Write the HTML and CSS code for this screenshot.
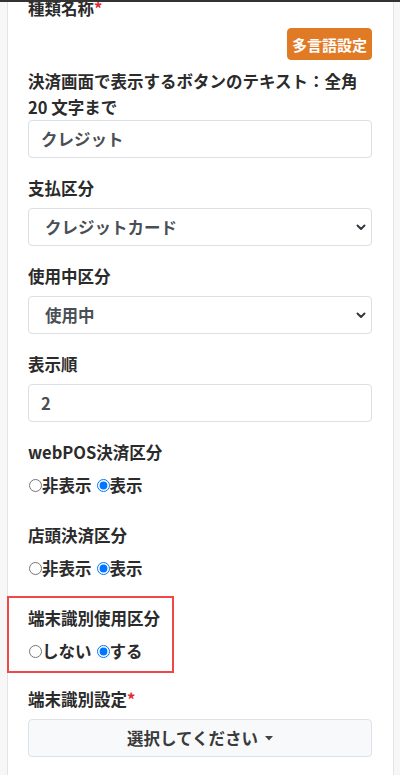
FILE: index.html
```html
<!DOCTYPE html>
<html lang="ja">
<head>
<meta charset="utf-8">
<title>種類設定</title>
<link rel="stylesheet" href="styles.css">
</head>
<body>
<div class="topbar"></div>
<main class="card">
  <div class="group">
    <label class="lbl req">種類名称</label>
    <div class="btn-row"><button class="btn-orange" type="button">多言語設定</button></div>
    <label class="lbl lbl-tight">決済画面で表示するボタンのテキスト：全角<br>20 文字まで</label>
    <input class="ctl" type="text" value="クレジット">
  </div>

  <div class="group">
    <label class="lbl">支払区分</label>
    <div class="select-wrap">
      <select class="ctl sel"><option>クレジットカード</option></select>
      <svg class="chev" width="10" height="7" viewBox="0 0 10 7"><path d="M1.5 1.5 L5 5 L8.5 1.5" fill="none" stroke="#343a40" stroke-width="2" stroke-linecap="round" stroke-linejoin="round"/></svg>
    </div>
  </div>

  <div class="group">
    <label class="lbl">使用中区分</label>
    <div class="select-wrap">
      <select class="ctl sel"><option>使用中</option></select>
      <svg class="chev" width="10" height="7" viewBox="0 0 10 7"><path d="M1.5 1.5 L5 5 L8.5 1.5" fill="none" stroke="#343a40" stroke-width="2" stroke-linecap="round" stroke-linejoin="round"/></svg>
    </div>
  </div>

  <div class="group">
    <label class="lbl">表示順</label>
    <input class="ctl" type="text" value="2">
  </div>

  <div class="group radio-group">
    <div class="lbl">webPOS決済区分</div>
    <div class="radios">
      <label class="opt"><input type="radio" name="webpos">非表示</label>
      <label class="opt"><input type="radio" name="webpos" checked>表示</label>
    </div>
  </div>

  <div class="group radio-group">
    <div class="lbl">店頭決済区分</div>
    <div class="radios">
      <label class="opt"><input type="radio" name="store">非表示</label>
      <label class="opt"><input type="radio" name="store" checked>表示</label>
    </div>
  </div>

  <div class="group highlight">
    <div class="lbl">端末識別使用区分</div>
    <div class="radios">
      <label class="opt"><input type="radio" name="term">しない</label>
      <label class="opt"><input type="radio" name="term" checked>する</label>
    </div>
  </div>

  <div class="group">
    <div class="lbl req">端末識別設定</div>
    <button class="dd" type="button">選択してください<svg class="caret" width="8" height="5" viewBox="0 0 8 5"><path d="M0 0 H8 L4 4.5 Z" fill="#444"/></svg></button>
  </div>
</main>
</body>
</html>
```

FILE: styles.css
```css
html, body {
  margin: 0;
  padding: 0;
  background: #f7f7f7;
}

body {
  font-family: "Noto Sans CJK JP", "Noto Sans", sans-serif;
  font-size: 16.5px;
  color: #2b2b2b;
}

.topbar {
  position: fixed;
  top: 0;
  left: 0;
  right: 0;
  height: 2px;
  background: #333;
  z-index: 10;
}

.card {
  margin: -5px 6px 0 7px;
  background: #fff;
  border: 1px solid #e4e4e4;
  border-top: none;
  padding: 0 21px 0 20px;
  min-height: 820px;
}

.group {
  margin-bottom: 17px;
}

.radio-group {
  margin-bottom: 24px;
}

.lbl {
  display: block;
  font-weight: 700;
  line-height: 26px;
  margin-bottom: 7px;
}

.lbl-tight {
  margin-bottom: 0;
}

.req::after {
  content: "*";
  color: #e3262f;
}

.btn-row {
  display: flex;
  justify-content: flex-end;
  margin-bottom: 8px;
}

.btn-orange {
  width: 85px;
  height: 32px;
  padding: 0;
  border: 1px solid #e07a24;
  border-radius: 4px;
  background: #e07a24;
  color: #fff;
  font-family: "Noto Sans CJK JP", "Noto Sans", sans-serif;
  font-size: 15px;
  font-weight: 700;
}

.ctl {
  display: block;
  box-sizing: border-box;
  width: 100%;
  height: 38px;
  margin: 0;
  padding: 0 12px;
  border: 1px solid #dcdfe3;
  border-radius: 4px;
  background: #fff;
  color: #4a4f55;
  font-family: "Noto Sans CJK JP", "Noto Sans", sans-serif;
  font-size: 16.5px;
  font-weight: 700;
}

.sel {
  appearance: none;
  -webkit-appearance: none;
  padding-left: 16px;
}

.select-wrap {
  position: relative;
}

.chev {
  position: absolute;
  right: 6px;
  top: 16px;
}

.radios {
  display: flex;
  align-items: center;
  gap: 4px;
  height: 26px;
  font-weight: 700;
}

.opt {
  display: inline-flex;
  align-items: center;
  line-height: 26px;
}

.opt input {
  width: 13px;
  height: 13px;
  margin: 0 0 0 1px;
}

.highlight {
  position: relative;
  margin-bottom: 22px;
}

.highlight::before {
  content: "";
  position: absolute;
  top: -9px;
  bottom: -9px;
  left: -21px;
  width: 167px;
  box-sizing: border-box;
  border: 2px solid #f04848;
  pointer-events: none;
}

.dd {
  display: flex;
  align-items: center;
  justify-content: center;
  gap: 7px;
  box-sizing: border-box;
  width: 100%;
  height: 38px;
  margin-top: 1px;
  padding: 0;
  border: 1px solid #dee2e6;
  border-radius: 4px;
  background: #f8f9fa;
  color: #3a3a3a;
  font-family: "Noto Sans CJK JP", "Noto Sans", sans-serif;
  font-size: 16.5px;
  font-weight: 700;
}

.caret {
  display: block;
}
```
